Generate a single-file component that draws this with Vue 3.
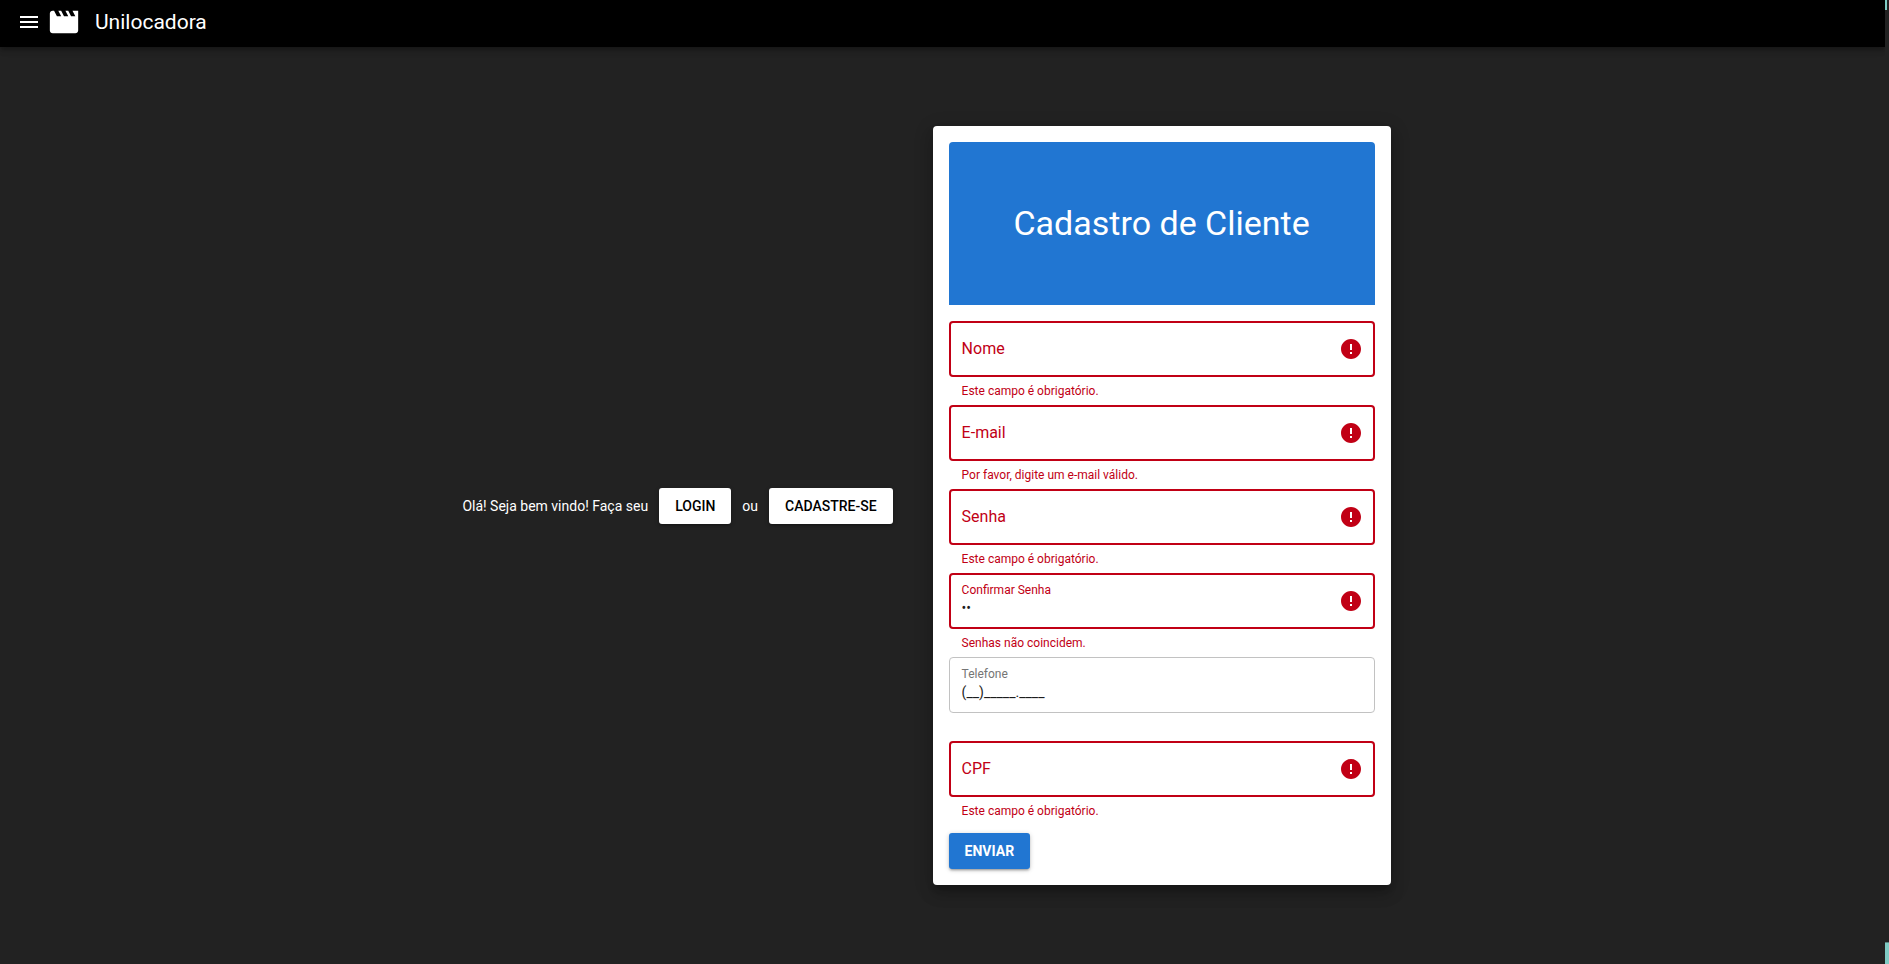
<script setup>
import { reactive } from 'vue'

const fields = reactive([
  { id: 'nome', label: 'Nome', type: 'text', value: '', error: 'Este campo é obrigatório.' },
  { id: 'email', label: 'E-mail', type: 'email', value: '', error: 'Por favor, digite um e-mail válido.' },
  { id: 'senha', label: 'Senha', type: 'password', value: '', error: 'Este campo é obrigatório.' },
  { id: 'confirmar', label: 'Confirmar Senha', type: 'password', value: '12', error: 'Senhas não coincidem.' },
  { id: 'telefone', label: 'Telefone', type: 'text', value: '(__)_____.____', error: '' },
  { id: 'cpf', label: 'CPF', type: 'text', value: '', error: 'Este campo é obrigatório.' },
])
</script>

<template>
  <div class="layout">
    <header class="toolbar">
      <button class="menu" type="button" aria-label="Menu">
        <svg viewBox="0 0 24 24"><path d="M3 18h18v-2H3v2zm0-5h18v-2H3v2zm0-7v2h18V6H3z" /></svg>
      </button>
      <svg class="logo" viewBox="0 0 24 24" aria-hidden="true">
        <path d="M18 4l2 4h-3l-2-4h-2l2 4h-3l-2-4H8l2 4H7L5 4H4c-1.100 0-1.990.9-1.990 2L2 18c0 1.100.9 2 2 2h16c1.100 0 2-.9 2-2V4h-4z" />
      </svg>
      <h1 class="title">Unilocadora</h1>
    </header>

    <main class="page">
      <section class="welcome">
        <span>Olá! Seja bem vindo! Faça seu</span>
        <button class="btn" type="button">LOGIN</button>
        <span>ou</span>
        <button class="btn" type="button">CADASTRE-SE</button>
      </section>

      <form class="card" novalidate @submit.prevent>
        <div class="banner"><h2>Cadastro de Cliente</h2></div>
        <div v-for="f in fields" :key="f.id" class="field" :class="{ invalid: f.error, filled: f.value }">
          <div class="control">
            <div class="entry">
              <label :for="f.id">{{ f.label }}</label>
              <input :id="f.id" v-model="f.value" :type="f.type" autocomplete="off" />
            </div>
            <svg v-if="f.error" class="alert" viewBox="0 0 24 24" aria-hidden="true">
              <path d="M12 2C6.480 2 2 6.480 2 12s4.480 10 10 10 10-4.480 10-10S17.520 2 12 2zm1 15h-2v-2h2v2zm0-4h-2V7h2v6z" />
            </svg>
          </div>
          <p class="message">{{ f.error }}</p>
        </div>
        <button class="btn submit" type="submit">ENVIAR</button>
      </form>
    </main>

    <div class="scroll" aria-hidden="true">
      <i class="mark top"></i>
      <i class="mark bottom"></i>
    </div>
  </div>
</template>

<style>
body {
  background: #222;
}
</style>

<style scoped>
* {
  box-sizing: border-box;
}
.layout {
  display: flex;
  flex-direction: column;
  min-height: 100vh;
  padding-right: 4px;
  background: #222;
  color: #fff;
  font: 14px/20px Roboto, sans-serif;
}
.toolbar {
  display: flex;
  align-items: center;
  height: 47px;
  padding: 0 12px 3px 17px;
  background: #000;
  box-shadow: 0 2px 4px -1px rgba(0, 0, 0, 0.2), 0 4px 5px rgba(0, 0, 0, 0.14), 0 1px 10px rgba(0, 0, 0, 0.12);
}
.menu {
  width: 24px;
  height: 24px;
  padding: 0;
  border: 0;
  background: none;
  color: #fff;
}
svg {
  display: block;
  fill: currentColor;
}
.logo {
  width: 34px;
  height: 34px;
  margin: 0 14px 0 6px;
}
.title {
  margin: 0;
  font-size: 21px;
  font-weight: 400;
  line-height: 32px;
}
.page {
  flex: 1;
  display: flex;
  align-items: center;
  justify-content: center;
  gap: 40px;
  padding-right: 32px;
}
.welcome {
  display: flex;
  align-items: center;
  gap: 11px;
}
.btn {
  height: 36px;
  padding: 0 16px;
  border: 0;
  border-radius: 3px;
  background: #fff;
  color: #000;
  font: 500 14px/20px Roboto, sans-serif;
  box-shadow: 0 1px 5px rgba(0, 0, 0, 0.2), 0 2px 2px rgba(0, 0, 0, 0.14), 0 3px 1px -2px rgba(0, 0, 0, 0.12);
}
.card {
  width: 458px;
  padding: 16px;
  border-radius: 4px;
  background: #fff;
  box-shadow: 0 6px 6px -3px rgba(0, 0, 0, 0.2), 0 10px 14px 1px rgba(0, 0, 0, 0.14), 0 4px 18px 3px rgba(0, 0, 0, 0.12);
}
.banner {
  display: flex;
  align-items: center;
  justify-content: center;
  height: 163px;
  margin-bottom: 16px;
  padding-bottom: 2px;
  border-radius: 4px 4px 0 0;
  background: #2176d2;
}
.banner h2 {
  margin: 0;
  font-size: 34px;
  font-weight: 400;
  line-height: 40px;
}
.control {
  display: flex;
  align-items: center;
  height: 56px;
  padding: 0 11px 0 12px;
  border: 1px solid #c2c2c2;
  border-radius: 4px;
}
.entry {
  flex: 1;
  display: flex;
  flex-direction: column;
}
label {
  color: #757575;
  font-size: 16px;
  line-height: 20px;
}
input {
  width: 100%;
  height: 0;
  padding: 0;
  border: 0;
  outline: 0;
  background: none;
  color: #1d1d1d;
  font: 14px/20px Roboto, sans-serif;
}
.filled .entry {
  padding-bottom: 2px;
}
.filled label {
  font-size: 12px;
  line-height: 16px;
}
.filled input {
  height: 20px;
}
.invalid .control {
  padding: 0 10px 0 11px;
  border: 2px solid #c10015;
}
.invalid label,
.message {
  color: #c10015;
}
.alert {
  width: 24px;
  height: 24px;
  color: #c10015;
}
.message {
  height: 28px;
  margin: 0;
  padding: 6px 13px;
  font-size: 12px;
  line-height: 16px;
}
.submit {
  display: block;
  margin-top: 8px;
  background: #2176d2;
  color: #fff;
  font-weight: 700;
}
.scroll {
  position: fixed;
  inset: 0 0 0 auto;
  display: flex;
  flex-direction: column;
  justify-content: space-between;
  width: 4px;
  background: #222;
}
.mark {
  background: #7fcbc4;
}
.top {
  width: 2px;
  height: 10px;
}
.bottom {
  height: 22px;
  border-top: 1px solid #5a8783;
}
</style>
